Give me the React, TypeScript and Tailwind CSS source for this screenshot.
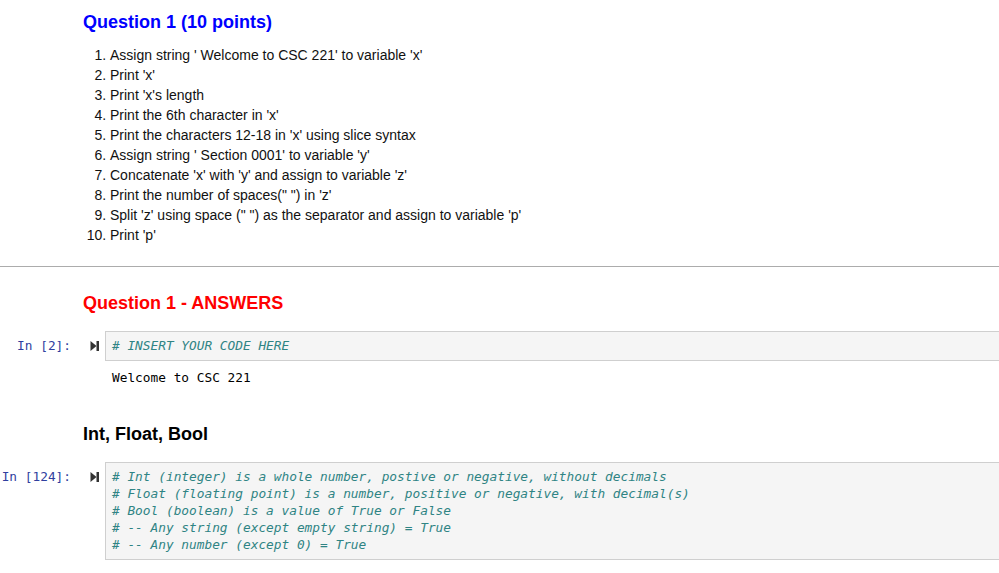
import React from "react";

const items = [
  "Assign string ' Welcome to CSC 221' to variable 'x'",
  "Print 'x'",
  "Print 'x's length",
  "Print the 6th character in 'x'",
  "Print the characters 12-18 in 'x' using slice syntax",
  "Assign string ' Section 0001' to variable 'y'",
  "Concatenate 'x' with 'y' and assign to variable 'z'",
  "Print the number of spaces(\" \") in 'z'",
  "Split 'z' using space (\" \") as the separator and assign to variable 'p'",
  "Print 'p'",
];

const code2 = [
  "# Int (integer) is a whole number, postive or negative, without decimals",
  "# Float (floating point) is a number, positive or negative, with decimal(s)",
  "# Bool (boolean) is a value of True or False",
  "# -- Any string (except empty string) = True",
  "# -- Any number (except 0) = True",
];

function RunIcon() {
  return (
    <svg width="10" height="12" viewBox="0 0 10 12" className="shrink-0">
      <path d="M0.5 1 L6.5 6 L0.5 11 Z" fill="#333" />
      <rect x="6.5" y="1" width="2.5" height="10" fill="#333" />
    </svg>
  );
}

function CodeCell({ n, lines }: { n: string; lines: string[] }) {
  return (
    <div className="flex items-start">
      <div className="w-[71px] shrink-0 text-right text-[#303f9f] font-['DejaVu_Sans_Mono',monospace] text-[12.8px] leading-[17px] pt-[6px] whitespace-pre">
        {n}
      </div>
      <div className="w-[34px] shrink-0 flex justify-start pl-[19px] pt-[9px]">
        <RunIcon />
      </div>
      <div className="flex-1 bg-[#f5f5f5] border border-[#cfcfcf] border-r-0 pl-[6px] pt-[5px] pb-[6px] font-['DejaVu_Sans_Mono',monospace] text-[12.8px] leading-[17px] italic text-[#2f8484] whitespace-pre">
        {lines.map((l, i) => (
          <div key={i}>{l}</div>
        ))}
      </div>
    </div>
  );
}

export default function App() {
  return (
    <div className="w-[999px] h-[573px] overflow-hidden bg-white font-['Liberation_Sans',Arial,sans-serif] text-black">
      <div className="pl-[83px] pt-[11px]">
        <h2 className="text-[18px] leading-[22px] font-bold text-[#0000ff]">Question 1 (10 points)</h2>
        <ol className="mt-[12px] pl-[27px] list-decimal text-[14px] leading-[20px] text-[#111]">
          {items.map((t, i) => (
            <li key={i}>{t}</li>
          ))}
        </ol>
      </div>
      <div className="mt-[21px] h-px bg-[#acacac]" />
      <div className="pl-[83px] pt-[25px]">
        <h2 className="text-[18px] leading-[22px] font-bold text-[#ff0000]">Question 1 - ANSWERS</h2>
      </div>
      <div className="mt-[17px]">
        <CodeCell n="In [2]:" lines={["# INSERT YOUR CODE HERE"]} />
      </div>
      <div className="pl-[112px] pt-[8px] font-['DejaVu_Sans_Mono',monospace] text-[12.8px] leading-[17px] text-black whitespace-pre">
        Welcome to CSC 221
      </div>
      <div className="pl-[83px] pt-[37px]">
        <h2 className="text-[18px] leading-[22px] font-bold text-black">Int, Float, Bool</h2>
      </div>
      <div className="mt-[17px]">
        <CodeCell n="In [124]:" lines={code2} />
      </div>
    </div>
  );
}
